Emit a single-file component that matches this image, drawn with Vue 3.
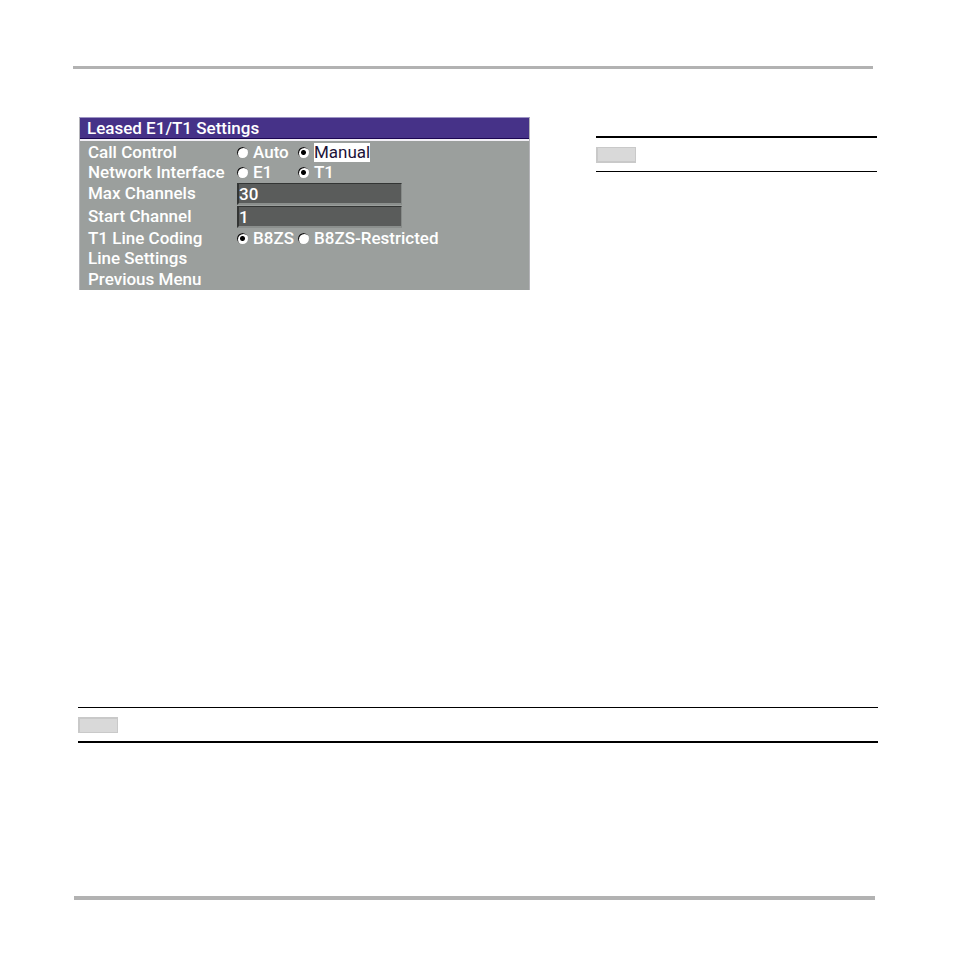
<script setup>
import { reactive } from 'vue'

const settings = reactive({
  control: 'Manual',
  network: 'T1',
  max: '30',
  start: '1',
  coding: 'B8ZS',
})

const rows = [
  { key: 'control', label: 'Call Control', options: ['Auto', 'Manual'] },
  { key: 'network', label: 'Network Interface', options: ['E1', 'T1'] },
  { key: 'max', label: 'Max Channels' },
  { key: 'start', label: 'Start Channel' },
  { key: 'coding', label: 'T1 Line Coding', options: ['B8ZS', 'B8ZS-Restricted'] },
]
</script>

<template>
  <div class="page">
    <hr class="rule rule-top" />
    <main class="content">
      <form class="panel" @submit.prevent>
        <h1 class="title">Leased E1/T1 Settings</h1>
        <div class="rows">
          <template v-for="row in rows" :key="row.key">
            <div v-if="row.options" class="row" role="radiogroup" :aria-labelledby="row.key + '-label'">
              <span :id="row.key + '-label'" class="name">{{ row.label }}</span>
              <label v-for="option in row.options" :key="option" class="option">
                <input v-model="settings[row.key]" class="radio" type="radio" :name="row.key" :value="option" />
                <span :class="{ focused: option === 'Manual' }">{{ option }}</span>
              </label>
            </div>
            <div v-else class="row row-field">
              <label class="name" :for="row.key">{{ row.label }}</label>
              <input :id="row.key" v-model="settings[row.key]" class="field" type="text" />
            </div>
          </template>
          <button class="row link" type="button">Line Settings</button>
          <button class="row link" type="button">Previous Menu</button>
        </div>
      </form>
      <aside class="note note-side"><span class="badge"></span></aside>
    </main>
    <aside class="note note-wide"><span class="badge"></span></aside>
    <hr class="rule rule-bottom" />
  </div>
</template>

<style>
body {
  background: #fff;
}
</style>

<style scoped>
.page {
  box-sizing: border-box;
  min-height: 100vh;
  padding: 66px 76px 54px 73px;
  display: flex;
  flex-direction: column;
  font: 500 17px/20px Roboto, "Liberation Sans", sans-serif;
}
.rule {
  border: 0;
  margin: 0;
  background: #b2b2b2;
  flex: none;
}
.rule-top {
  height: 3px;
  margin-right: 5px;
}
.rule-bottom {
  height: 4px;
  margin: 153px 3px 0 1px;
}
.content {
  flex: 1;
  display: flex;
  align-items: flex-start;
  gap: 66px;
  padding: 48px 1px 0 6px;
}
.panel {
  box-sizing: border-box;
  flex: 0 1 451px;
  border: 1px solid #b4b4b8;
  border-top-color: #9d95c4;
  border-bottom: 0;
  background: #9b9f9d;
  color: #fff;
}
.title {
  margin: 0;
  padding-left: 7px;
  background: #463288;
  border-bottom: 1px solid #1c0653;
  box-shadow: 0 2px 0 #f1eff5;
  font: inherit;
}
.rows {
  padding: 3px 0 1px 8px;
}
.row {
  display: flex;
  align-items: center;
  height: 20px;
}
.row:last-child {
  height: 21px;
}
.row-field {
  align-items: flex-start;
  height: 22px;
  margin-top: 1px;
}
.name {
  width: 149px;
  flex: none;
  white-space: nowrap;
}
.option {
  display: flex;
  align-items: center;
  gap: 5px;
  min-width: 61px;
  white-space: nowrap;
}
.focused {
  background: #fff;
  color: #1c1238;
  font-weight: 400;
  line-height: 19px;
}
.radio {
  appearance: none;
  box-sizing: border-box;
  width: 11px;
  height: 11px;
  margin: 0;
  border-radius: 50%;
  background: #fff;
  box-shadow: inset 1px 1px 0 #111;
}
.radio:checked {
  background: radial-gradient(circle at 50% 50%, #000 2px, #fff 3px);
}
.field {
  box-sizing: border-box;
  flex: 0 1 165px;
  min-width: 0;
  height: 22px;
  margin: 0;
  padding: 0;
  border: 1px solid #333534;
  border-left-width: 2px;
  border-right: 1px solid #868a88;
  border-bottom: 2px solid #8b8f8d;
  background: #5a5c5b;
  color: #fff;
  font: inherit;
  outline: 0;
}
.link {
  width: 100%;
  padding: 0;
  border: 0;
  background: none;
  color: inherit;
  font: inherit;
  text-align: left;
}
.note {
  display: flex;
  align-items: center;
  height: 33px;
}
.note-side {
  flex: 1;
  margin-top: 19px;
  border-top: 2px solid #000;
  border-bottom: 1px solid #000;
}
.note-wide {
  margin-left: 5px;
  border-top: 1px solid #000;
  border-bottom: 2px solid #000;
}
.badge {
  box-sizing: border-box;
  width: 40px;
  height: 16px;
  border: 1px solid #c9c9c9;
  border-width: 1px 1px 2px 2px;
  background: #d9d9d9;
}
.note-wide .badge {
  border-width: 2px 1px 1px 2px;
}
</style>
